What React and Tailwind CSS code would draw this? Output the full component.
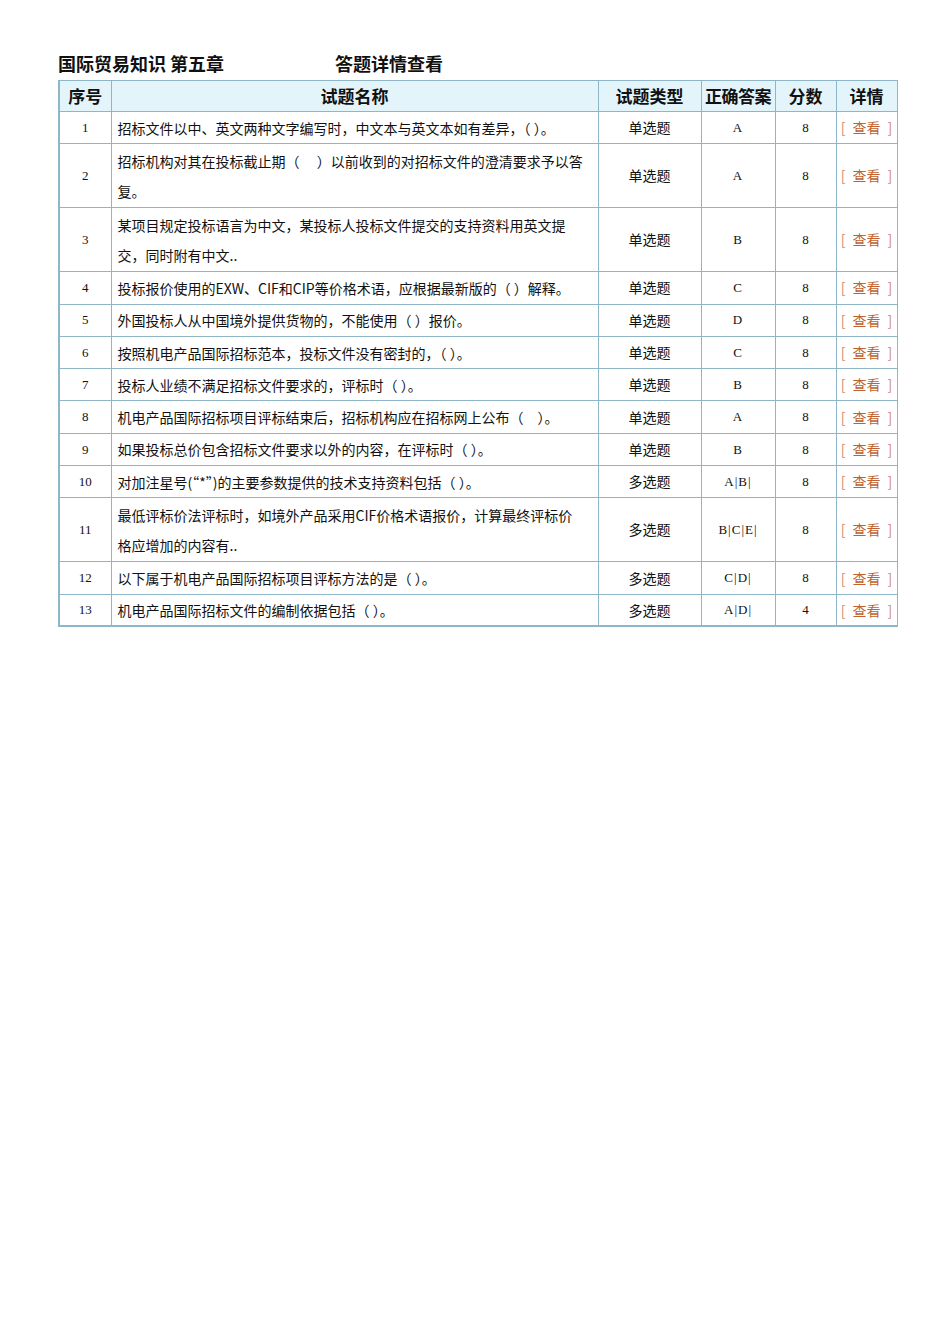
import React from "react";

const rows = [
  { id: 1, name: ["招标文件以中、英文两种文字编写时，中文本与英文本如有差异，（ ）。"], type: "单选题", answer: "A", score: 8 },
  { id: 2, name: ["招标机构对其在投标截止期（　 ）以前收到的对招标文件的澄清要求予以答", "复。"], type: "单选题", answer: "A", score: 8 },
  { id: 3, name: ["某项目规定投标语言为中文，某投标人投标文件提交的支持资料用英文提", "交，同时附有中文.."], type: "单选题", answer: "B", score: 8 },
  { id: 4, name: ["投标报价使用的EXW、CIF和CIP等价格术语，应根据最新版的（ ）解释。"], type: "单选题", answer: "C", score: 8 },
  { id: 5, name: ["外国投标人从中国境外提供货物的，不能使用（ ）报价。"], type: "单选题", answer: "D", score: 8 },
  { id: 6, name: ["按照机电产品国际招标范本，投标文件没有密封的，（ ）。"], type: "单选题", answer: "C", score: 8 },
  { id: 7, name: ["投标人业绩不满足招标文件要求的，评标时（ ）。"], type: "单选题", answer: "B", score: 8 },
  { id: 8, name: ["机电产品国际招标项目评标结束后，招标机构应在招标网上公布（　）。"], type: "单选题", answer: "A", score: 8 },
  { id: 9, name: ["如果投标总价包含招标文件要求以外的内容，在评标时（ ）。"], type: "单选题", answer: "B", score: 8 },
  { id: 10, name: ["对加注星号(“*”)的主要参数提供的技术支持资料包括（ ）。"], type: "多选题", answer: "A|B|", score: 8 },
  { id: 11, name: ["最低评标价法评标时，如境外产品采用CIF价格术语报价，计算最终评标价", "格应增加的内容有.."], type: "多选题", answer: "B|C|E|", score: 8 },
  { id: 12, name: ["以下属于机电产品国际招标项目评标方法的是（ ）。"], type: "多选题", answer: "C|D|", score: 8 },
  { id: 13, name: ["机电产品国际招标文件的编制依据包括（ ）。"], type: "多选题", answer: "A|D|", score: 4 },
];

const cjk = "font-['SimSun','Noto_Sans_CJK_SC',sans-serif]";
const latin = "font-['Liberation_Serif','Noto_Sans_CJK_SC',serif]";
const cell = "border border-[#8fb5c9] p-0 text-center align-middle";

export default function App() {
  return (
    <div className={`min-h-[1344px] w-[950px] bg-white pl-[58px] pt-[50px] text-[#111] ${cjk}`}>
      {/* Title */}
      <div className="flex h-[26px] items-center text-[18px] font-bold">
        <span className="w-[277px]">国际贸易知识 第五章</span>
        <span>答题详情查看</span>
      </div>

      {/* Table */}
      <table className="mt-[4px] w-[838px] table-fixed border-collapse border-b-2 border-l-2 border-[#8fb5c9] text-[14px]">
        <colgroup>
          <col className="w-[52px]" />
          <col className="w-[487px]" />
          <col className="w-[103px]" />
          <col className="w-[74px]" />
          <col className="w-[61px]" />
          <col className="w-[61px]" />
        </colgroup>
        <thead>
          <tr className="h-[31px] bg-[#e4f4fb] text-[17px] font-bold">
            <th className={cell}>序号</th>
            <th className={cell}>试题名称</th>
            <th className={cell}>试题类型</th>
            <th className={`${cell} tracking-[-0.5px] whitespace-nowrap`}>正确答案</th>
            <th className={cell}>分数</th>
            <th className={cell}>详情</th>
          </tr>
        </thead>
        <tbody>
          {rows.map((r) => (
            <tr key={r.id} className={r.name.length > 1 ? "h-[64px]" : "h-[32.3px]"}>
              <td className={`${cell} ${latin} text-[13px]`}>{r.id}</td>
              <td className="whitespace-nowrap border border-[#8fb5c9] px-[6px] py-0 text-left align-middle leading-[30px]">
                {r.name.map((line, i) => (
                  <div key={i}>{line}</div>
                ))}
              </td>
              <td className={cell}>{r.type}</td>
              <td className={`${cell} ${latin} text-[13px] tracking-[1px]`}>{r.answer}</td>
              <td className={`${cell} ${latin} text-[13px]`}>{r.score}</td>
              <td className={`${cell} whitespace-nowrap text-[#c0622f]`}>
                <span className="text-[#d08a6a]">[</span>
                <span className="mx-[7px]">查看</span>
                <span className="text-[#d08a6a]">]</span>
              </td>
            </tr>
          ))}
        </tbody>
      </table>
    </div>
  );
}
